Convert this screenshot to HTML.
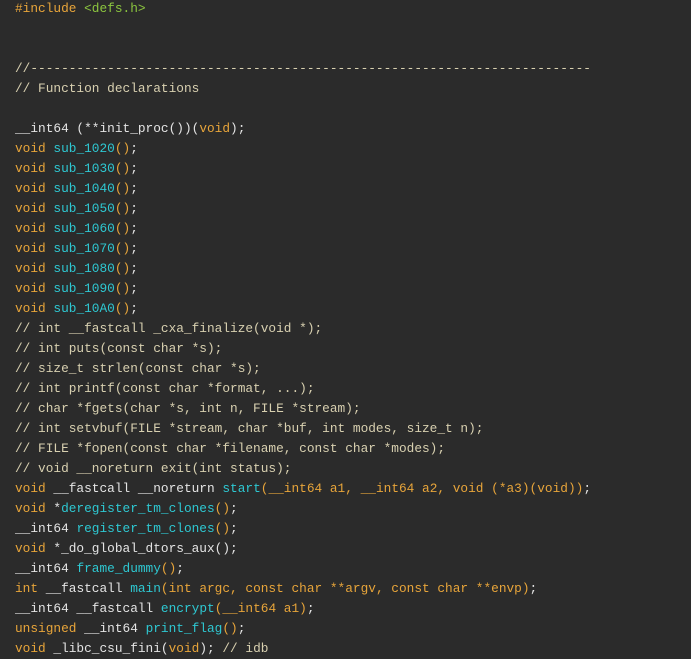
<!DOCTYPE html>
<html><head><style>
html,body{margin:0;padding:0;background:#2b2b2b;width:691px;height:646px;overflow:hidden}
pre{margin:0;position:absolute;left:15px;top:-1px;font-family:"Liberation Mono",monospace;font-size:12.8px;line-height:20px;color:#e4e4e4}
.k{color:#e8a53a}.f{color:#2ec8d2}.c{color:#d8d0b0}.g{color:#8cc63f}
</style></head><body><pre><span class="k">#include</span> <span class="g">&lt;defs.h&gt;</span>


<span class="c">//-------------------------------------------------------------------------</span>
<span class="c">// Function declarations</span>

__int64 (**init_proc())(<span class="k">void</span>);
<span class="k">void</span> <span class="f">sub_1020</span><span class="k">()</span>;
<span class="k">void</span> <span class="f">sub_1030</span><span class="k">()</span>;
<span class="k">void</span> <span class="f">sub_1040</span><span class="k">()</span>;
<span class="k">void</span> <span class="f">sub_1050</span><span class="k">()</span>;
<span class="k">void</span> <span class="f">sub_1060</span><span class="k">()</span>;
<span class="k">void</span> <span class="f">sub_1070</span><span class="k">()</span>;
<span class="k">void</span> <span class="f">sub_1080</span><span class="k">()</span>;
<span class="k">void</span> <span class="f">sub_1090</span><span class="k">()</span>;
<span class="k">void</span> <span class="f">sub_10A0</span><span class="k">()</span>;
<span class="c">// int __fastcall _cxa_finalize(void *);</span>
<span class="c">// int puts(const char *s);</span>
<span class="c">// size_t strlen(const char *s);</span>
<span class="c">// int printf(const char *format, ...);</span>
<span class="c">// char *fgets(char *s, int n, FILE *stream);</span>
<span class="c">// int setvbuf(FILE *stream, char *buf, int modes, size_t n);</span>
<span class="c">// FILE *fopen(const char *filename, const char *modes);</span>
<span class="c">// void __noreturn exit(int status);</span>
<span class="k">void</span> __fastcall __noreturn <span class="f">start</span><span class="k">(__int64 a1, __int64 a2, void (*a3)(void))</span>;
<span class="k">void</span> *<span class="f">deregister_tm_clones</span><span class="k">()</span>;
__int64 <span class="f">register_tm_clones</span><span class="k">()</span>;
<span class="k">void</span> *_do_global_dtors_aux();
__int64 <span class="f">frame_dummy</span><span class="k">()</span>;
<span class="k">int</span> __fastcall <span class="f">main</span><span class="k">(int argc, const char **argv, const char **envp)</span>;
__int64 __fastcall <span class="f">encrypt</span><span class="k">(__int64 a1)</span>;
<span class="k">unsigned</span> __int64 <span class="f">print_flag</span><span class="k">()</span>;
<span class="k">void</span> _libc_csu_fini(<span class="k">void</span>); <span class="c">// idb</span>
</pre></body></html>
